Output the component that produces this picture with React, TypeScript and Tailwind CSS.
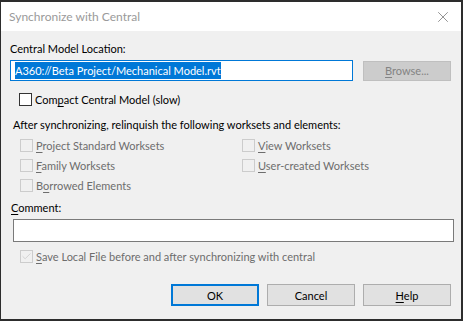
import { Check, X } from "lucide-react";

const font = { fontFamily: 'Lato, "Noto Sans", sans-serif' };

function Box({ checked, disabled }: { checked?: boolean; disabled?: boolean }) {
  return (
    <span
      className={`flex h-[13px] w-[13px] shrink-0 items-center justify-center border ${
        disabled ? "border-[#cccccc] bg-[#f0f0f0]" : "border-[#333333] bg-white"
      }`}
    >
      {checked && <Check size={11} strokeWidth={1.5} className="text-[#c5c5c5]" />}
    </span>
  );
}

// label with one underlined access key
function Label({ pre, k, post }: { pre?: string; k: string; post: string }) {
  return (
    <span>
      {pre}
      <span className="underline underline-offset-2">{k}</span>
      {post}
    </span>
  );
}

function Option({
  pre,
  k,
  post,
  checked,
  disabled,
}: {
  pre?: string;
  k: string;
  post: string;
  checked?: boolean;
  disabled?: boolean;
}) {
  return (
    <div className={`flex h-[20px] items-center gap-[3px] ${disabled ? "text-[#6d6d6d]" : "text-black"}`}>
      <Box checked={checked} disabled={disabled} />
      <Label pre={pre} k={k} post={post} />
    </div>
  );
}

export default function App() {
  return (
    <div className="h-[321px] w-[463px] bg-[#2d2d2d] pl-px pt-[2px]" style={font}>
      <div className="flex h-[317px] w-[460px] flex-col bg-[#f0f0f0] text-[11px] leading-none text-black">
        {/* title bar */}
        <div className="flex h-[29px] items-center justify-between bg-white pl-[8px] pr-[9px]">
          <span className="text-[12px] text-[#9a9a9a]">Synchronize with Central</span>
          <X size={18} strokeWidth={1} className="text-[#707070]" />
        </div>

        <div className="flex flex-1 flex-col px-[9px]">
          <div className="mt-[12px] h-[14px]">Central Model Location:</div>
          <div className="mt-[3px] flex items-center justify-between">
            <div className="flex h-[21px] w-[343px] items-center border border-[#0078d7] bg-white px-[4px]">
              <span className="bg-[#0078d7] py-[3px] text-white">A360://Beta Project/Mechanical Model.rvt</span>
            </div>
            <div className="mr-[1px] flex h-[20px] w-[88px] items-center justify-center border border-[#bfbfbf] bg-[#cccccc] text-[#838383]">
              <Label k="B" post="rowse..." />
            </div>
          </div>

          <div className="mt-[8px] pl-[9px]">
            <Option pre="Com" k="p" post="act Central Model (slow)" />
          </div>

          <div className="mt-[10px] pl-[3px]">After synchronizing, relinquish the following worksets and elements:</div>

          <div className="mt-[5px] grid grid-cols-[222px_1fr] pl-[10px]">
            <div className="flex flex-col">
              <Option k="P" post="roject Standard Worksets" disabled />
              <Option k="F" post="amily Worksets" disabled />
              <Option pre="B" k="o" post="rrowed Elements" disabled />
            </div>
            <div className="flex flex-col">
              <Option k="V" post="iew Worksets" disabled />
              <Option k="U" post="ser-created Worksets" disabled />
            </div>
          </div>

          <div className="mt-[7px] pl-[1px]">
            <Label k="C" post="omment:" />
          </div>
          <div className="mt-[6px] ml-[3px] h-[23px] w-[441px] border border-[#7a7a7a] bg-white" />

          <div className="mt-[4px] pl-[10px]">
            <Option k="S" post="ave Local File before and after synchronizing with central" checked disabled />
          </div>

          <div className="mt-[18px] flex justify-end gap-[8px] pr-[1px]">
            <button className="flex h-[22px] w-[88px] items-center justify-center border-2 border-[#0078d7] bg-[#e1e1e1]">
              OK
            </button>
            <button className="flex h-[22px] w-[88px] items-center justify-center border border-[#adadad] bg-[#e1e1e1]">
              Cancel
            </button>
            <button className="flex h-[22px] w-[88px] items-center justify-center border border-[#adadad] bg-[#e1e1e1]">
              <Label k="H" post="elp" />
            </button>
          </div>
        </div>
      </div>
    </div>
  );
}
